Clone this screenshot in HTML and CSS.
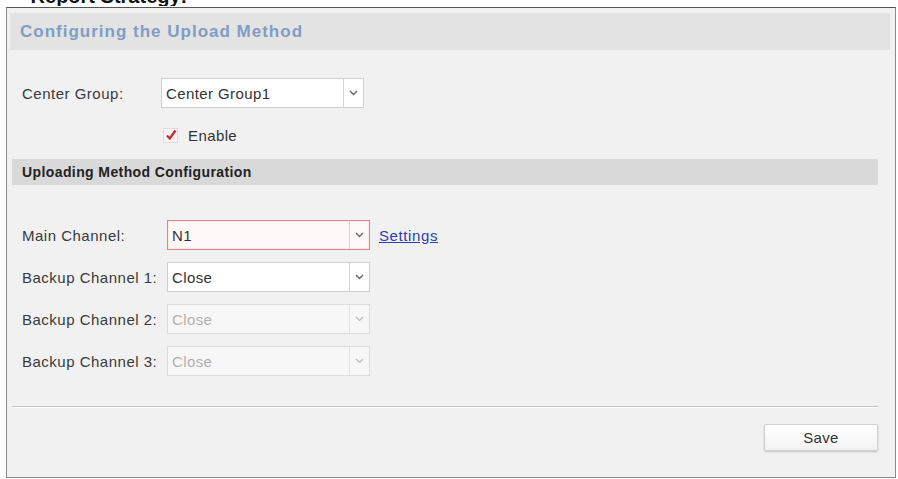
FILE: index.html
```html
<!DOCTYPE html>
<html>
<head>
    <title>Configuring the Upload Method</title>
    <link rel="stylesheet" href="styles.css">
</head>
<body>
    <div class="doc-heading">&bull; Report Strategy:</div>

    <div class="panel">
        <div class="panel-title">Configuring the Upload Method</div>

        <div class="panel-body">
            <div class="row group-row">
                <label class="lbl">Center Group:</label>
                <div class="sel">
                    <span class="val">Center Group1</span>
                    <span class="arrow"><svg width="9" height="6" viewBox="0 0 9 6"><path d="M1 1l3.5 3.5L8 1" fill="none" stroke="#666" stroke-width="1.4"/></svg></span>
                </div>
            </div>

            <div class="enable">
                <span class="check"><svg width="12" height="12" viewBox="0 0 12 12"><path d="M2 6.5l2.8 3L10.5 1.5" fill="none" stroke="#c42a30" stroke-width="2.2"/></svg></span>
                <span>Enable</span>
            </div>

            <div class="section">Uploading Method Configuration</div>

            <div class="channels">
                <div class="row">
                    <label class="lbl wide">Main Channel:</label>
                    <div class="sel error">
                        <span class="val">N1</span>
                        <span class="arrow"><svg width="9" height="6" viewBox="0 0 9 6"><path d="M1 1l3.5 3.5L8 1" fill="none" stroke="#666" stroke-width="1.4"/></svg></span>
                    </div>
                    <a href="#" class="link">Settings</a>
                </div>
                <div class="row">
                    <label class="lbl wide">Backup Channel 1:</label>
                    <div class="sel">
                        <span class="val">Close</span>
                        <span class="arrow"><svg width="9" height="6" viewBox="0 0 9 6"><path d="M1 1l3.5 3.5L8 1" fill="none" stroke="#666" stroke-width="1.4"/></svg></span>
                    </div>
                </div>
                <div class="row">
                    <label class="lbl wide">Backup Channel 2:</label>
                    <div class="sel disabled">
                        <span class="val">Close</span>
                        <span class="arrow"><svg width="9" height="6" viewBox="0 0 9 6"><path d="M1 1l3.5 3.5L8 1" fill="none" stroke="#bbb" stroke-width="1.2"/></svg></span>
                    </div>
                </div>
                <div class="row">
                    <label class="lbl wide">Backup Channel 3:</label>
                    <div class="sel disabled">
                        <span class="val">Close</span>
                        <span class="arrow"><svg width="9" height="6" viewBox="0 0 9 6"><path d="M1 1l3.5 3.5L8 1" fill="none" stroke="#bbb" stroke-width="1.2"/></svg></span>
                    </div>
                </div>
            </div>

            <hr class="divider">

            <div class="actions">
                <button class="save">Save</button>
            </div>
        </div>
    </div>
</body>
</html>
```

FILE: styles.css
```css
body { margin: 0; background: #fff; font-family: "Liberation Sans", Arial, sans-serif; color: #333; overflow: hidden; }
.doc-heading { font-size: 20px; font-weight: bold; color: #111; line-height: 20px; height: 20px; margin-top: -14px; padding-left: 18px; overflow: hidden; }
.panel { margin: 1px 0 0 6px; width: 880px; height: 464px; border: 1px solid #8a8a8a; border-top-color: #555; background: #f1f1f1; padding: 5px 5px 0 3px; }
.panel-title { height: 37px; line-height: 38px; background: #e3e3e3; padding-left: 10px; font-size: 17px; font-weight: bold; letter-spacing: 1px; color: #7f9dc6; }
.panel-body { padding: 0 12px 0 2px; }
.row { display: flex; align-items: center; height: 30px; }
.group-row { margin-top: 28px; }
.lbl { width: 139px; padding-left: 10px; flex: none; font-size: 15px; letter-spacing: 0.5px; color: #3a3a3a; }
.lbl.wide { width: 145px; }
.sel { width: 201px; height: 28px; border: 1px solid #cfcfcf; background: #fff; display: flex; align-items: center; }
.sel .val { flex: 1; padding-left: 4px; font-size: 15px; letter-spacing: 0.4px; color: #333; }
.sel .arrow { width: 19px; height: 28px; border-left: 1px solid #d6d6d6; display: flex; align-items: center; justify-content: center; }
.sel.error { border-color: #d8878a; background: #fff8f8; box-shadow: inset 0 0 2px #f2c6c8; }
.sel.disabled { border-color: #ddd; background: #f7f7f7; }
.sel.disabled .val { color: #b0b0b0; }
.sel.disabled .arrow { border-left-color: #e2e2e2; }
.link { margin-left: 9px; font-size: 15px; letter-spacing: 0.6px; color: #2b3fb5; }
.enable { display: flex; align-items: center; margin: 19px 0 0 151px; font-size: 15px; letter-spacing: 0.4px; color: #333; height: 16px; }
.check { width: 13px; height: 13px; border: 1px solid #ddd; background: #fdf3f3; margin-right: 10px; display: flex; align-items: center; justify-content: center; }
.section { margin-top: 16px; height: 26px; line-height: 27px; background: #d9d9d9; padding-left: 10px; font-size: 14px; font-weight: bold; letter-spacing: 0.4px; color: #222; }
.channels { margin-top: 35px; display: flex; flex-direction: column; gap: 12px; }
.divider { margin: 30px 0 0 0; border: none; border-top: 1px solid #c4c4c4; border-bottom: 1px solid #fff; }
.actions { display: flex; justify-content: flex-end; margin-top: 16px; }
.save { width: 114px; height: 27px; font-family: "Liberation Sans", Arial, sans-serif; font-size: 15px; letter-spacing: 0.3px; color: #333; background: linear-gradient(#fff, #f3f3f3); border: 1px solid #d0d0d0; border-radius: 2px; box-shadow: 0 1px 2px rgba(0,0,0,0.2); }
```
